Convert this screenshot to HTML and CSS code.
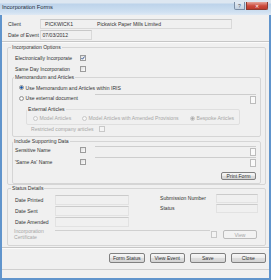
FILE: index.html
```html
<!DOCTYPE html>
<html lang="en">
<head>
    <meta charset="UTF-8">
    <title>Incorporation Forms</title>
    <link rel="stylesheet" href="styles.css">
</head>
<body>

<div class="window">
    <div class="titlebar">
        <span class="title">Incorporation Forms</span>
        <div class="caption-btns">
            <span class="cap cap-help">?</span>
            <span class="cap cap-close">&#x2715;</span>
        </div>
    </div>

    <div class="frame">
        <div class="client">
            <div class="client-row">
                <span class="client-label">Client</span>
                <div class="client-box">
                    <span class="client-code">PICKWICK1</span>
                    <span>Pickwick Paper Mills Limited</span>
                </div>
            </div>
            <div class="client-row date-row">
                <span class="client-label">Date of Event</span>
                <div class="date-box">07/03/2012</div>
            </div>
        </div>

        <div class="sep"></div>

        <!-- Incorporation options -->
        <fieldset class="group outer">
            <legend>Incorporation Options</legend>
            <div class="opt-row first">
                <span class="opt-label">Electronically Incorporate</span>
                <span class="check">
                    <svg width="4" height="4" viewBox="0 0 4 4"><path d="M0.4 2 L1.5 3.2 L3.6 0.5" fill="none" stroke="#2b4f8f" stroke-width="0.9"/></svg>
                </span>
            </div>
            <div class="opt-row">
                <span class="opt-label">Same Day Incorporation</span>
                <span class="check"></span>
            </div>

            <fieldset class="group inner memo">
                <legend>Memorandum and Articles</legend>
                <div class="radio-row first">
                    <span class="radio on"></span>
                    <span>Use Memorandum and Articles within IRIS</span>
                </div>
                <div class="radio-row">
                    <span class="radio-label"><span class="radio"></span>Use external document</span>
                    <div class="field"><span class="field-btn"></span></div>
                </div>

                <fieldset class="group external">
                    <legend>External Articles</legend>
                    <div class="ext-row">
                        <span class="ext-item w1"><span class="radio off"></span>Model Articles</span>
                        <span class="ext-item w2"><span class="radio off"></span>Model Articles with Amended Provisions</span>
                        <span class="ext-item"><span class="radio off sel"></span>Bespoke Articles</span>
                    </div>
                </fieldset>
                <div class="restricted-row">
                    <span>Restricted company articles</span>
                    <span class="check off"></span>
                </div>
            </fieldset>

            <fieldset class="group inner support">
                <legend>Include Supporting Data</legend>
                <div class="sup-row">
                    <span class="opt-label">Sensitive Name</span>
                    <span class="check"></span>
                    <div class="field"><span class="field-btn"></span></div>
                </div>
                <div class="sup-row second">
                    <span class="opt-label">'Same As' Name</span>
                    <span class="check"></span>
                    <div class="field"><span class="field-btn"></span></div>
                </div>
                <div class="print-row">
                    <button class="btn">Print Form</button>
                </div>
            </fieldset>
        </fieldset>

        <!-- Status details -->
        <fieldset class="group outer status">
            <legend>Status Details</legend>
            <div class="status-grid">
                <div class="status-left">
                    <div class="status-row"><span class="status-label">Date Printed</span><span class="box"></span></div>
                    <div class="status-row"><span class="status-label">Date Sent</span><span class="box"></span></div>
                    <div class="status-row"><span class="status-label">Date Amended</span><span class="box"></span></div>
                </div>
                <div class="status-right">
                    <div class="status-row"><span class="status-label wide">Submission Number</span><span class="box small"></span></div>
                    <div class="status-row"><span class="status-label wide">Status</span><span class="box small"></span></div>
                </div>
            </div>
            <div class="cert-row">
                <span class="status-label cert">Incorporation<br>Certificate</span>
                <span class="cert-line"></span>
                <span class="check off"></span>
                <button class="btn disabled">View</button>
            </div>
        </fieldset>

        <div class="sep"></div>

        <div class="actions">
            <button class="btn">Form Status</button>
            <button class="btn">View Event</button>
            <button class="btn">Save</button>
            <button class="btn">Close</button>
        </div>

        <div class="statusbar"></div>
    </div>
</div>

</body>
</html>
```

FILE: styles.css
```css
* {
    box-sizing: border-box;
}
body {
    margin: 0;
    font-family: "Liberation Sans", Arial, sans-serif;
    font-size: 5.1px;
    color: #333;
    background: #fff;
}
.window {
    width: 271px;
    height: 280px;
    display: flex;
    flex-direction: column;
}
.titlebar {
    height: 15px;
    display: flex;
    align-items: flex-start;
    background: linear-gradient(#dde7f1 0, #dde7f1 3px, #bcd3ea 4px, #cfe0f1 12px, #dfe9f4 15px);
}
.title {
    font-size: 5.7px;
    line-height: 6px;
    margin: 4px 0 0 2px;
    color: #1d2c3c;
}
.caption-btns {
    margin: 2px 3px 0 auto;
    display: flex;
    gap: 1px;
}
.cap {
    height: 8px;
    display: flex;
    align-items: center;
    justify-content: center;
    font-size: 5px;
    border: 1px solid #7b8ea5;
    border-top: 0;
}
.cap-help {
    width: 11px;
    color: #3c4f66;
    background: linear-gradient(#e4ecf5, #c2d1e2);
    border-radius: 0 0 0 2px;
}
.cap-close {
    width: 22px;
    color: #fff;
    background: linear-gradient(#e6a59b, #cc4b3c 55%, #bb3a2c);
    border-color: #8c3a30;
    border-radius: 0 0 2px 0;
}
.frame {
    flex: 1;
    display: flex;
    flex-direction: column;
    background: #f0f0f0;
    border: 2px solid #6094cc;
    border-top: 0;
}

/* client header */
.client {
    padding: 4px 0 0 6px;
}
.client-row {
    display: flex;
    align-items: center;
    height: 10px;
}
.date-row {
    margin-top: 1px;
}
.client-label {
    width: 32px;
}
.client-box {
    width: 192px;
    height: 10px;
    display: flex;
    align-items: center;
    padding-left: 4px;
    border: 1px solid #d9d9d9;
    border-top-color: #c8c8c8;
}
.client-code {
    width: 52px;
}
.date-box {
    width: 52px;
    height: 10px;
    display: flex;
    align-items: center;
    padding-left: 1.5px;
    border: 1px solid #d9d9d9;
    border-top-color: #c8c8c8;
}
.sep {
    height: 2px;
    margin-top: 1px;
    border-top: 1px solid #c6c6c6;
    border-bottom: 1px solid #fbfbfb;
}

/* group boxes */
.group {
    margin: 0;
    min-inline-size: 0;
    border: 1px solid #d5d5d5;
    border-radius: 2px;
    padding: 0;
}
.group legend {
    padding: 0 1px;
    line-height: 7px;
}
.outer {
    margin: 1px 3px 0 5px;
    padding: 0 4px;
}
.outer legend {
    margin-left: -1px;
}
.status {
    margin-top: 0;
}
.inner legend {
    margin-left: 1px;
}
.support legend {
    margin-left: 0;
}
.opt-row {
    height: 11px;
    display: flex;
    align-items: center;
    padding-left: 3px;
}
.opt-row.first {
    margin-top: 1px;
}
.opt-label {
    width: 65px;
}
.check {
    width: 6px;
    height: 6px;
    display: flex;
    align-items: center;
    justify-content: center;
    border: 1px solid #9c9c9c;
    background: linear-gradient(135deg, #dedede, #fdfdfd);
}
.check.off {
    border-color: #c8c8c8;
    background: #f4f4f4;
}

.memo {
    padding-bottom: 3px;
}
.radio-row {
    height: 10.5px;
    display: flex;
    align-items: center;
    padding-left: 6px;
}
.radio-row.first {
    margin-top: 1.5px;
}
.radio {
    width: 5px;
    height: 5px;
    margin-right: 1.5px;
    border-radius: 50%;
    border: 1px solid #959595;
    background: radial-gradient(#fff, #e0e0e0);
    flex-shrink: 0;
}
.radio.on {
    background: radial-gradient(#1e4f94 0, #3a78c4 1.2px, #fff 1.6px);
}
.radio.off {
    border-color: #c8c8c8;
    background: #f6f6f6;
}
.radio.sel {
    background: radial-gradient(#a8a8a8 0, #b8b8b8 1.2px, #f6f6f6 1.6px);
}
.radio-label {
    width: 76px;
    display: flex;
    align-items: center;
}
.field {
    width: 161px;
    height: 9.5px;
    align-self: flex-start;
    margin-top: 1px;
    display: flex;
    justify-content: flex-end;
    align-items: flex-end;
    border-top: 1px solid #cdcdcd;
}
.field-btn {
    width: 6px;
    height: 8px;
    border: 1px solid #bcbcbc;
    background: #fafafa;
}

.external {
    margin: 2.5px 20px 0 13px;
    padding: 0 0 1px;
    border-color: #dfdfdf;
}
.external legend {
    margin-left: 0;
}
.ext-row {
    height: 10px;
    display: flex;
    align-items: center;
    padding-left: 6px;
    color: #a6a6a6;
}
.ext-item {
    display: flex;
    align-items: center;
}
.ext-item.w1 {
    width: 49px;
}
.ext-item.w2 {
    width: 108px;
}
.restricted-row {
    height: 8px;
    display: flex;
    align-items: center;
    gap: 5px;
    padding-left: 18px;
    color: #a6a6a6;
}

.support {
    margin-top: 1px;
    padding-bottom: 3px;
}
.sup-row {
    height: 10px;
    display: flex;
    align-items: center;
    padding-left: 2px;
}
.sup-row.second {
    height: 11px;
    margin-top: 1px;
}
.sup-row .check {
    margin-right: 9px;
}
.print-row {
    margin-top: 5px;
    display: flex;
    justify-content: flex-end;
    padding-right: 4px;
}

.btn {
    width: 35px;
    height: 8px;
    padding: 0;
    font-family: inherit;
    font-size: 5.1px;
    color: #333;
    border: 1px solid #808080;
    border-radius: 2px;
    background: linear-gradient(#f7f7f7, #ebebeb 50%, #dddddd 51%, #d4d4d4);
}
.btn.disabled {
    color: #a6a6a6;
    border-color: #bcbcbc;
    background: #f3f3f3;
}

/* status details */
.status {
    padding-bottom: 4px;
}
.status-grid {
    display: flex;
    padding-left: 3px;
}
.status-left {
    margin-top: 2px;
}
.status-left .status-row {
    height: 11px;
}
.status-right {
    margin: 1px 0 0 31px;
}
.status-right .status-row {
    height: 10px;
}
.status-row {
    display: flex;
    align-items: center;
}
.status-label {
    width: 40px;
}
.status-label.wide {
    width: 56px;
}
.box {
    width: 74px;
    height: 10px;
    border: 1px solid #e2e2e2;
    border-top-color: #cbcbcb;
}
.box.small {
    width: 42px;
    height: 9px;
}
.cert-row {
    margin-top: 1px;
    height: 13px;
    display: flex;
    align-items: center;
    padding-left: 2px;
}
.status-label.cert {
    width: 41px;
    line-height: 5.5px;
    color: #a6a6a6;
}
.cert-line {
    width: 155px;
    height: 9px;
    align-self: flex-start;
    margin-top: 2px;
    border-top: 1px solid #d0d0d0;
}
.cert-row .check {
    height: 7px;
    margin-left: 1px;
}
.cert-row .btn {
    width: 34px;
    height: 9px;
    margin-left: 6px;
}

/* bottom buttons */
.actions {
    margin-top: 4px;
    display: flex;
    justify-content: flex-end;
    gap: 5px;
    padding-right: 3px;
}
.actions .btn {
    width: 35.5px;
    height: 9.5px;
}
.statusbar {
    flex: 1;
    margin-top: 6px;
    border-top: 1px solid #cfcfcf;
    background: #f0f0f0;
}
```
